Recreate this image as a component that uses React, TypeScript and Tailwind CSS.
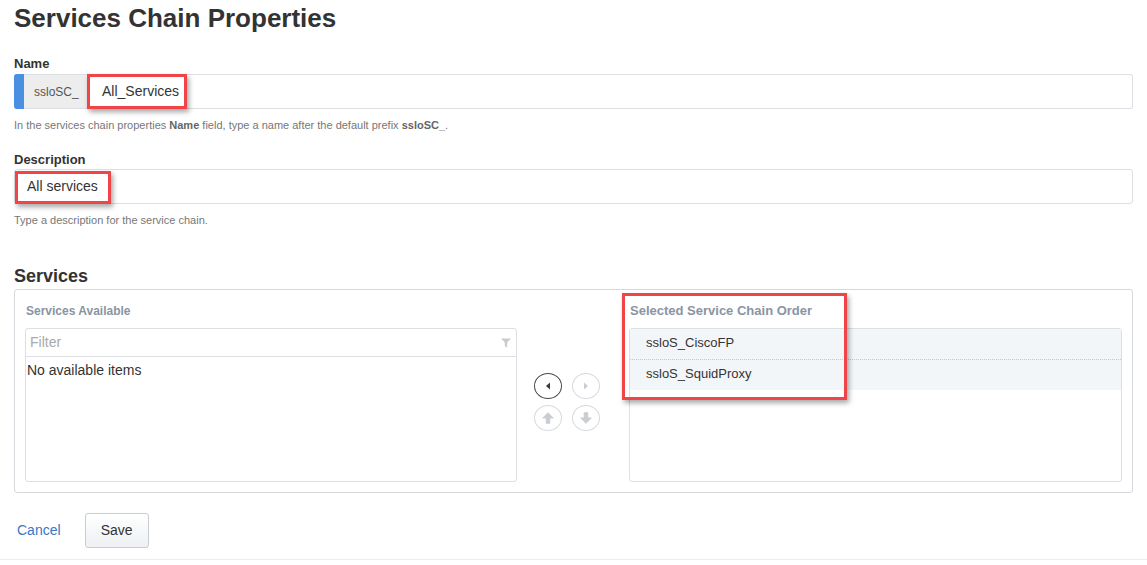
import React from "react";

function CaretIcon({ dir, color }: { dir: "left" | "right"; color: string }) {
    return (
        <svg width="6" height="8" viewBox="0 0 6 8">
            {dir === "left" ? (
                <path d="M5 0.5 L1 4 L5 7.5 Z" fill={color} />
            ) : (
                <path d="M1 0.5 L5 4 L1 7.5 Z" fill={color} />
            )}
        </svg>
    );
}

function ArrowIcon({ dir }: { dir: "up" | "down" }) {
    return (
        <svg width="12" height="12" viewBox="0 0 10 10" style={{ transform: dir === "down" ? "rotate(180deg)" : undefined }}>
            <path
                d="M5 0.6 L9.4 5 L6.5 5 L6.5 9.4 L3.5 9.4 L3.5 5 L0.6 5 Z"
                fill="#c9cdd3"
                stroke="#c9cdd3"
                strokeWidth="0.8"
                strokeLinejoin="round"
            />
        </svg>
    );
}

function RoundButton({ active, children }: { active?: boolean; children: React.ReactNode }) {
    return (
        <div
            className={
                active
                    ? "w-[28px] h-[26px] rounded-[50%] border border-[#4a4a4a] bg-white flex items-center justify-center"
                    : "w-[28px] h-[26px] rounded-[50%] border border-[#d6d9de] bg-white flex items-center justify-center"
            }
        >
            {children}
        </div>
    );
}

const redBox = "absolute border-[3px] border-[#ef4448] shadow-[2px_3px_5px_rgba(0,0,0,0.35)] pointer-events-none";

export default function App() {
    return (
        <div className="w-full min-h-[565px] bg-white font-['Liberation_Sans',Arial,sans-serif] text-[#333]">
            <div className="px-[14px] pt-[2px]">
                <h1 className="text-[26px] leading-[32px] font-bold text-[#333]">Services Chain Properties</h1>

                <div className="mt-[22px] mb-[2px] text-[13px] leading-[16px] font-bold">Name</div>
                <div className="relative flex h-[35px] rounded-[3px] border border-l-0 border-[#dcdfe3]">
                    <div className="w-[10px] bg-[#4a90e2] rounded-l-[3px] -my-px" />
                    <div className="w-[63px] bg-[#ededed] text-[12px] text-[#555] pl-[10px] flex items-center">ssloSC_</div>
                    <div className="pl-[15px] text-[14px] flex items-center">All_Services</div>
                    <div className={redBox + " left-[73px] -top-px w-[100px] h-[35px]"} />
                </div>
                <div className="mt-[9px] text-[11px] leading-[15px] text-[#777]">
                    In the services chain properties <span className="font-bold text-[#666]">Name</span> field, type a name after
                    the default prefix <span className="font-bold text-[#666]">ssloSC_</span>.
                </div>

                <div className="mt-[19px] mb-px text-[13px] leading-[16px] font-bold">Description</div>
                <div className="relative flex h-[35px] rounded-[3px] border border-[#dcdfe3]">
                    <div className="pl-[12px] text-[14px] flex items-center">All services</div>
                    <div className={redBox + " left-0 top-px w-[96px] h-[33px]"} />
                </div>
                <div className="mt-[9px] text-[11px] leading-[15px] text-[#777]">Type a description for the service chain.</div>

                <h2 className="mt-[37px] text-[18px] leading-[22px] font-bold">Services</h2>
                <div className="relative mt-[2px] h-[204px] rounded-[3px] border border-[#d5d8dd]">
                    <div className="grid grid-cols-[492px_112px_1fr] px-[10px] pt-[13px]">
                        <div>
                            <div className="pl-px text-[12px] leading-[16px] font-bold text-[#8b94a3]">Services Available</div>
                            <div className="mt-[9px] h-[154px] rounded-[3px] border border-[#dcdfe3] flex flex-col">
                                <div className="h-[28px] border-b border-[#dcdfe3] flex items-center justify-between pl-[4px] pr-[5px]">
                                    <span className="text-[14px] text-[#aaa]">Filter</span>
                                    <svg width="10" height="10" viewBox="0 0 10 10">
                                        <path d="M0 0.5 H10 L6.2 4.6 V9.5 L3.8 8.3 V4.6 Z" fill="#c8cbd0" />
                                    </svg>
                                </div>
                                <div className="pt-[4px] pl-px text-[14px] leading-[18px]">No available items</div>
                            </div>
                        </div>

                        <div className="pl-[17px] pt-[70px]">
                            <div className="grid grid-cols-[28px_28px] gap-x-[10px] gap-y-[6px]">
                                <RoundButton active>
                                    <CaretIcon dir="left" color="#3a3a3a" />
                                </RoundButton>
                                <RoundButton>
                                    <CaretIcon dir="right" color="#c9cdd3" />
                                </RoundButton>
                                <RoundButton>
                                    <ArrowIcon dir="up" />
                                </RoundButton>
                                <RoundButton>
                                    <ArrowIcon dir="down" />
                                </RoundButton>
                            </div>
                        </div>

                        <div>
                            <div className="pl-px text-[13px] leading-[16px] font-bold text-[#8b94a3]">Selected Service Chain Order</div>
                            <div className="mt-[9px] h-[154px] rounded-[3px] border border-[#dcdfe3] flex flex-col">
                                <div className="h-[31px] pb-[3px] bg-[#f3f6f9] border-b border-dotted border-[#c4c8ce] pl-[16px] text-[13px] flex items-center">
                                    ssloS_CiscoFP
                                </div>
                                <div className="h-[30px] pb-[3px] bg-[#f3f6f9] pl-[16px] text-[13px] flex items-center">ssloS_SquidProxy</div>
                            </div>
                        </div>
                    </div>
                    <div className={redBox + " left-[607px] top-[3px] w-[225px] h-[107px]"} />
                </div>

                <div className="mt-[20px] flex items-center">
                    <a className="ml-[3px] text-[14px] text-[#3a78c3] cursor-pointer">Cancel</a>
                    <button className="ml-[24px] w-[64px] h-[35px] rounded-[3px] border border-[#c9ccd2] bg-gradient-to-b from-white to-[#eef0f3] text-[14px] text-[#333]">
                        Save
                    </button>
                </div>
            </div>
            <div className="mt-[11px] border-t border-[#ececec]" />
        </div>
    );
}
